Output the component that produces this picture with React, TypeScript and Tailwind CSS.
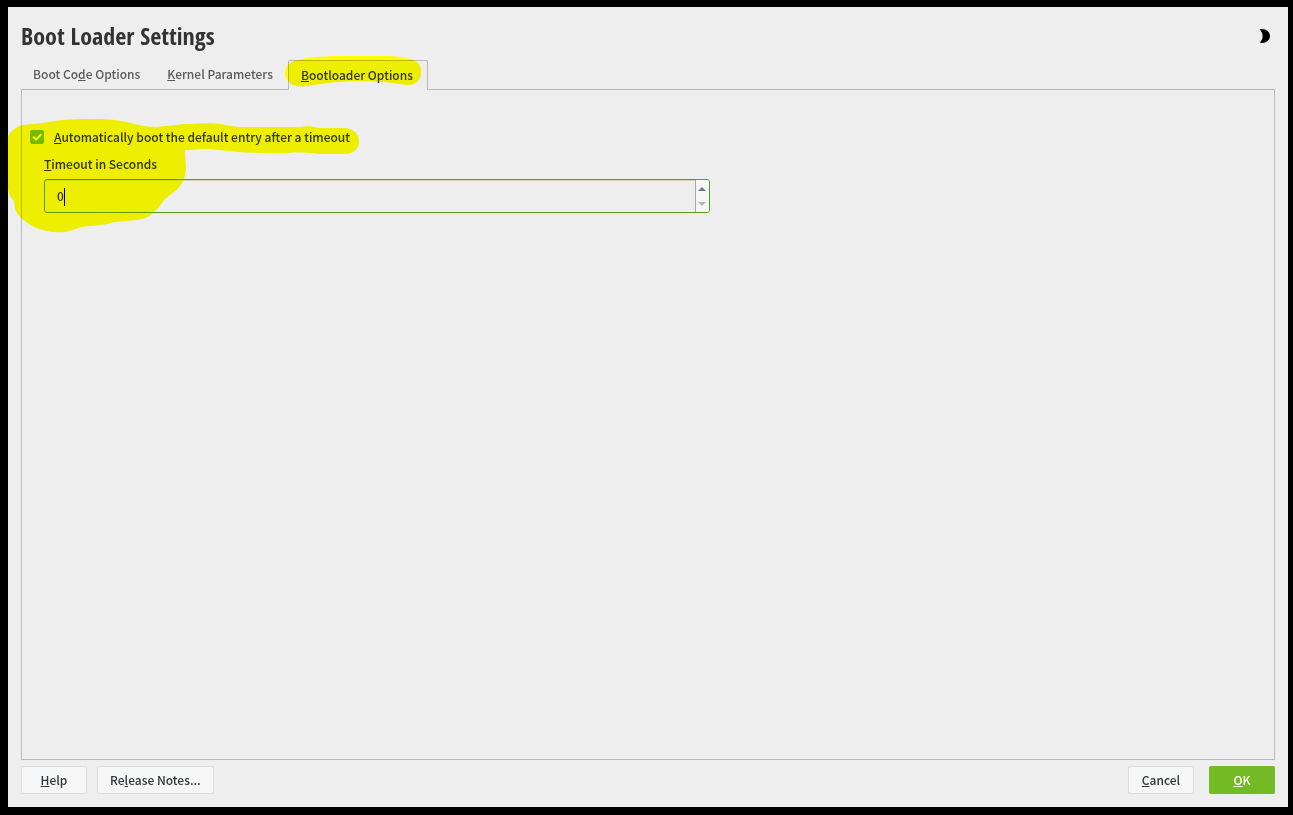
import { useState } from "react";
import type { ReactNode } from "react";

const tabs = [
  { id: "boot-code", before: "Boot Co", accel: "d", after: "e Options" },
  { id: "kernel", before: "", accel: "K", after: "ernel Parameters" },
  { id: "bootloader", before: "", accel: "B", after: "ootloader Options" },
];

/* Mnemonic letter, underlined like in a desktop dialog */
const Accel = ({ children }: { children: ReactNode }) => (
  <span className="underline decoration-1 underline-offset-1">{children}</span>
);

const DialogButton = ({ children }: { children: ReactNode }) => (
  <button
    type="button"
    className="h-7 min-w-[66px] rounded-xs border border-[#dcdcdc] bg-[#f6f6f6] px-3 leading-5 text-[#31363b] hover:bg-white"
  >
    {children}
  </button>
);

/* Marker stroke over the active tab */
const TabMarker = () => (
  <svg
    aria-hidden="true"
    className="pointer-events-none absolute -top-[7px] -left-[5px] h-9 w-[138px] mix-blend-multiply"
    viewBox="283 54 138 36"
  >
    <path
      fill="#ffff00"
      d="M284 73C284 66 289 61 297 60C308 57 325 56 345 56H384C394 56 405 57 412 60C418 62 420 66 420 72C420 80 415 85 407 85C399 85 391 82 380 82C357 80 329 82 313 85C304 87 295 87 290 84C286 81 284 78 284 73Z"
    />
  </svg>
);

/* Marker strokes over the timeout settings */
const PanelMarker = () => (
  <svg
    aria-hidden="true"
    className="pointer-events-none absolute top-[26px] -left-3.5 h-[120px] w-[354px] mix-blend-multiply"
    viewBox="8 116 354 120"
  >
    <path
      fill="#ffff00"
      d="M8 136C12 130 17 126 23 125C34 124 44 123 55 121C69 119 84 119 96 119C109 119 118 120 126 122C136 124 144 127 156 127C171 126 178 124 190 124C205 123 217 123 226 125C235 127 241 127 252 127H300C306 126 312 126 318 128L345 128C354 129 359 134 359 141C359 149 353 154 345 154H320C310 153 300 152 289 153C268 153 251 153 238 152C225 151 215 149 205 149L185 150C185 157 186 164 186 170C184 181 181 187 174 192C169 196 164 199 162 203C157 210 151 217 142 219C131 221 119 221 111 223C104 225 96 226 88 226C79 227 72 231 64 232C53 233 43 231 34 227C27 223 21 219 17 213C14 209 15 205 14 201C11 198 9 195 8 190Z"
    />
  </svg>
);

export default function App() {
  const [enabled, setEnabled] = useState(true);
  const [timeout, setTimeoutValue] = useState("0");
  const step = (n: number) => setTimeoutValue(String(Math.max(0, Number(timeout) + n)));

  return (
    <div className="flex min-h-screen flex-col bg-black pt-[7px] pr-[5px] pb-2 pl-2 font-['Noto_Sans_CJK_SC',sans-serif] text-xs leading-5 font-medium text-[#31363b]">
      <main className="flex flex-1 flex-col bg-[#eeeeee] p-[13px]">
        <header className="flex h-8 items-center justify-between">
          <h1 className="font-['Open_Sans_Condensed','Liberation_Sans_Narrow',sans-serif] text-2xl font-bold text-[#333333]">
            Boot Loader Settings
          </h1>
          <button type="button" aria-label="Toggle dark theme" className="mr-1 text-black">
            <svg className="h-4 w-3" viewBox="0 0 12 16" fill="currentColor">
              <path d="M.5 1.4C6 0 11 3.3 11 8S6 16 .5 14.6C4.8 11.6 4.6 4.6 .5 1.4Z" />
            </svg>
          </button>
        </header>

        <div role="tablist" className="mt-2 flex h-[30px]">
          {tabs.map((tab) => {
            const active = tab.id === "bootloader";
            return (
              <button
                key={tab.id}
                type="button"
                role="tab"
                aria-selected={active}
                className={
                  active
                    ? "relative z-10 rounded-t-xs border border-b-0 border-[#b9b9b9] bg-[#eeeeee] pr-3.5 pb-0.5 pl-3"
                    : "pr-[15px] pb-0.5 pl-3 text-[#5a5a5a]"
                }
              >
                {tab.before}
                <Accel>{tab.accel}</Accel>
                {tab.after}
                {active && <TabMarker />}
              </button>
            );
          })}
        </div>

        <section role="tabpanel" className="relative -mt-px flex-1 border border-[#b9b9b9] px-2 pt-[37px]">
          <div className="flex items-center gap-2.5">
            <span className="relative flex size-3.5">
              <input
                id="auto-boot"
                type="checkbox"
                checked={enabled}
                onChange={(e) => setEnabled(e.target.checked)}
                className="peer size-3.5 appearance-none rounded-xs border border-[#73ba25] checked:bg-[#73ba25]"
              />
              <svg
                aria-hidden="true"
                className="pointer-events-none absolute inset-0 hidden size-3.5 peer-checked:block"
                viewBox="0 0 14 14"
                fill="none"
                stroke="white"
                strokeWidth="2"
              >
                <path d="M3 6.8L6 9.6L11.2 4.2" />
              </svg>
            </span>
            <label htmlFor="auto-boot">
              <Accel>A</Accel>utomatically boot the default entry after a timeout
            </label>
          </div>

          <div className="mt-[7px] ml-3.5">
            <label htmlFor="timeout">
              <Accel>T</Accel>imeout in Seconds
            </label>
            <div className="relative mt-[5px] flex h-[34px] w-[666px] max-w-full rounded-[3px] border border-[#5c9a1c] shadow-[inset_0_1px_0_#cfe0bd]">
              <input
                id="timeout"
                type="text"
                inputMode="numeric"
                value={timeout}
                onChange={(e) => setTimeoutValue(e.target.value)}
                className="min-w-0 flex-1 bg-transparent px-3 caret-transparent outline-none"
              />
              <span className="pointer-events-none absolute top-2 left-[19px] h-[18px] w-px bg-black" />
              <div className="flex w-3.5 flex-col rounded-r-xs border-l border-[#aaaaaa] bg-[#f6f6f6] py-px pr-px">
                <button type="button" aria-label="Increase" onClick={() => step(1)} className="flex flex-1 items-center justify-center">
                  <svg className="h-1 w-2" viewBox="0 0 8 4" fill="#777777">
                    <path d="M0 4L4 0L8 4Z" />
                  </svg>
                </button>
                <button type="button" aria-label="Decrease" onClick={() => step(-1)} className="flex flex-1 items-center justify-center">
                  <svg className="h-1 w-2" viewBox="0 0 8 4" fill="#b4b4b4">
                    <path d="M0 0L4 4L8 0Z" />
                  </svg>
                </button>
              </div>
            </div>
          </div>
          <PanelMarker />
        </section>

        <footer className="mt-1.5 flex items-center gap-2.5">
          <DialogButton>
            <Accel>H</Accel>elp
          </DialogButton>
          <DialogButton>
            Re<Accel>l</Accel>ease Notes...
          </DialogButton>
          <div className="ml-auto flex gap-[15px]">
            <DialogButton>
              <Accel>C</Accel>ancel
            </DialogButton>
            <button type="button" className="h-7 min-w-[66px] rounded-xs bg-[#73ba25] px-3 leading-5 text-white hover:bg-[#7fc832]">
              <Accel>O</Accel>K
            </button>
          </div>
        </footer>
      </main>
    </div>
  );
}
